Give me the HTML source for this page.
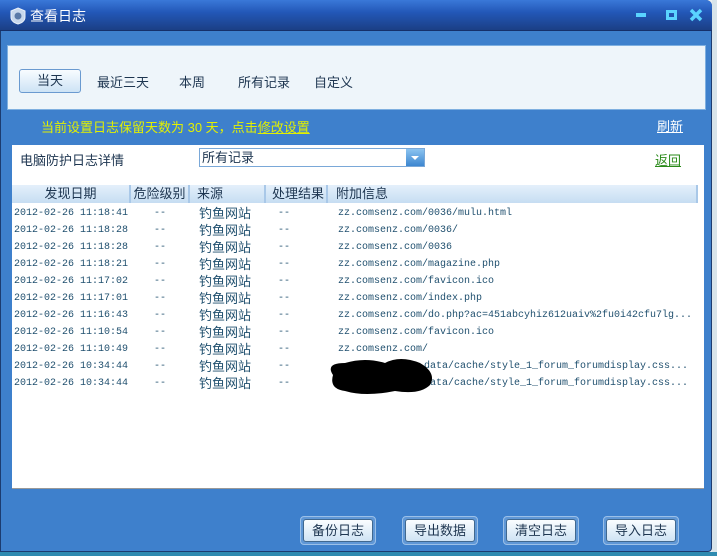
<!DOCTYPE html>
<html><head><meta charset="utf-8"><style>
*{margin:0;padding:0;box-sizing:border-box}
body{width:717px;height:556px;overflow:hidden;background:#e8eef2;font-family:"Liberation Sans","Noto Sans CJK SC",sans-serif;font-size:12px;position:relative}
.a{position:absolute}
.win{left:0;top:0;width:712px;height:552px;background:#3e80cc;border:1px solid #1c3c70;border-radius:0 6px 4px 0}
.title{left:0;top:0;width:712px;height:31px;background:linear-gradient(#3a78d8,#2358b8 40%,#1b3f85);border-bottom:1px solid #15306a;border-radius:0 6px 0 0}
.t{color:#fff;font-size:14px;left:30px;top:6px}
.top{left:7px;top:45px;width:699px;height:65px;background:#eef5fa;border:1px solid #7fb0e0}
.tab{top:26px;font-size:13px;color:#1d3550}
.cur{left:11px;top:23px;width:62px;height:24px;border:1px solid #6a9ad0;border-radius:3px;background:linear-gradient(#f8fcff,#cde3f5);text-align:center;line-height:22px}
.main{left:12px;top:145px;width:692px;height:344px;background:#fff;border-bottom:1px solid #999}
.hd{top:40px;height:18px;background:linear-gradient(#e4f0fb,#c6ddf2);left:0;width:686px;font-size:13px;color:#1d3550;line-height:18px}
.hd div{position:absolute;top:0;height:18px;border-right:2px solid #a9c8e8}
.row{left:0;height:17px;line-height:17px;color:#1f4f6e;width:690px;white-space:nowrap}
.row span{position:absolute;white-space:nowrap}
.m{font-family:"Liberation Mono",monospace;font-size:10px}
.btn{top:516px;width:76px;height:29px;border:1px solid #9bc0e8;border-radius:4px;background:#5f97d6;padding:2px}
.btn div{width:100%;height:100%;border:1px solid #40688f;border-radius:3px;background:linear-gradient(#fafdff,#cfe3f4);text-align:center;line-height:21px;font-size:13px;color:#1d3550}
</style></head><body>
<div class="a" style="left:712px;top:0;width:5px;height:556px;background:#d8e4ea"></div>
<div class="a" style="left:0;top:552px;width:717px;height:4px;background:#2e8ab0"></div>
<div class="a win"></div>
<div class="a title"></div>
<svg class="a" style="left:10px;top:7px" width="16" height="18"><path d="M8 1L15 4V10Q15 15 8 17Q1 15 1 10V4Z" fill="#c8d8ec" stroke="#e8f0fa"/><circle cx="8" cy="9" r="3.5" fill="#5a7aa8"/></svg>
<div class="a t">查看日志</div>
<div class="a" style="left:636px;top:13px;width:10px;height:4px;background:#5ad4ff"></div>
<div class="a" style="left:666px;top:10px;width:11px;height:10px;border:3px solid #5ad4ff"></div>
<svg class="a" style="left:689px;top:8px" width="14" height="14"><path d="M2 2L12 12M12 2L2 12" stroke="#5ad4ff" stroke-width="3.5"/></svg>
<div class="a top">
<div class="a cur" style="font-size:13px;color:#1d3550">当天</div>
<div class="a tab" style="left:89px">最近三天</div>
<div class="a tab" style="left:171px">本周</div>
<div class="a tab" style="left:230px">所有记录</div>
<div class="a tab" style="left:306px">自定义</div>
</div>
<div class="a" style="left:41px;top:117px;color:#e2f000;font-size:13px">当前设置日志保留天数为 30 天，点击<u>修改设置</u></div>
<div class="a" style="left:657px;top:116px;color:#fff;font-size:13px;text-decoration:underline">刷新</div>
<div class="a main">
<div class="a" style="left:8px;top:5px;font-size:13px;color:#1d3550">电脑防护日志详情</div>
<div class="a" style="left:187px;top:3px;width:226px;height:19px;border:1px solid #7aa8d8;background:#fff;font-size:13px;color:#1d3550;padding-left:2px;line-height:17px">所有记录</div>
<div class="a" style="left:394px;top:4px;width:18px;height:17px;background:linear-gradient(#8cc4f0,#3d86d0)"><svg width="18" height="17"><path d="M5 7H13L9 11Z" fill="#fff"/></svg></div>
<div class="a" style="left:643px;top:5px;color:#2a8a1a;font-size:13px;text-decoration:underline">返回</div>
<div class="a hd">
<div style="left:0;width:119px;text-align:center">发现日期</div>
<div style="left:119px;width:59px;text-align:center">危险级别</div>
<div style="left:178px;width:76px;padding-left:7px">来源</div>
<div style="left:254px;width:62px;text-align:right;padding-right:2px">处理结果</div>
<div style="left:316px;width:370px;padding-left:8px">附加信息</div>
</div>
</div>
<div class="a" style="left:12px;top:205px;width:690px">
<div class="a row" style="top:0"><span class="m" style="left:2px">2012-02-26 11:18:41</span><span class="m" style="left:142px">--</span><span style="left:187px;font-size:13px">钓鱼网站</span><span class="m" style="left:266px">--</span><span class="m" style="left:326px">zz.comsenz.com/0036/mulu.html</span></div>
<div class="a row" style="top:17px"><span class="m" style="left:2px">2012-02-26 11:18:28</span><span class="m" style="left:142px">--</span><span style="left:187px;font-size:13px">钓鱼网站</span><span class="m" style="left:266px">--</span><span class="m" style="left:326px">zz.comsenz.com/0036/</span></div>
<div class="a row" style="top:34px"><span class="m" style="left:2px">2012-02-26 11:18:28</span><span class="m" style="left:142px">--</span><span style="left:187px;font-size:13px">钓鱼网站</span><span class="m" style="left:266px">--</span><span class="m" style="left:326px">zz.comsenz.com/0036</span></div>
<div class="a row" style="top:51px"><span class="m" style="left:2px">2012-02-26 11:18:21</span><span class="m" style="left:142px">--</span><span style="left:187px;font-size:13px">钓鱼网站</span><span class="m" style="left:266px">--</span><span class="m" style="left:326px">zz.comsenz.com/magazine.php</span></div>
<div class="a row" style="top:68px"><span class="m" style="left:2px">2012-02-26 11:17:02</span><span class="m" style="left:142px">--</span><span style="left:187px;font-size:13px">钓鱼网站</span><span class="m" style="left:266px">--</span><span class="m" style="left:326px">zz.comsenz.com/favicon.ico</span></div>
<div class="a row" style="top:85px"><span class="m" style="left:2px">2012-02-26 11:17:01</span><span class="m" style="left:142px">--</span><span style="left:187px;font-size:13px">钓鱼网站</span><span class="m" style="left:266px">--</span><span class="m" style="left:326px">zz.comsenz.com/index.php</span></div>
<div class="a row" style="top:102px"><span class="m" style="left:2px">2012-02-26 11:16:43</span><span class="m" style="left:142px">--</span><span style="left:187px;font-size:13px">钓鱼网站</span><span class="m" style="left:266px">--</span><span class="m" style="left:326px">zz.comsenz.com/do.php?ac=451abcyhiz612uaiv%2fu0i42cfu7lg...</span></div>
<div class="a row" style="top:119px"><span class="m" style="left:2px">2012-02-26 11:10:54</span><span class="m" style="left:142px">--</span><span style="left:187px;font-size:13px">钓鱼网站</span><span class="m" style="left:266px">--</span><span class="m" style="left:326px">zz.comsenz.com/favicon.ico</span></div>
<div class="a row" style="top:136px"><span class="m" style="left:2px">2012-02-26 11:10:49</span><span class="m" style="left:142px">--</span><span style="left:187px;font-size:13px">钓鱼网站</span><span class="m" style="left:266px">--</span><span class="m" style="left:326px">zz.comsenz.com/</span></div>
<div class="a row" style="top:153px"><span class="m" style="left:2px">2012-02-26 10:34:44</span><span class="m" style="left:142px">--</span><span style="left:187px;font-size:13px">钓鱼网站</span><span class="m" style="left:266px">--</span><span class="m" style="left:412px">data/cache/style_1_forum_forumdisplay.css...</span></div>
<div class="a row" style="top:170px"><span class="m" style="left:2px">2012-02-26 10:34:44</span><span class="m" style="left:142px">--</span><span style="left:187px;font-size:13px">钓鱼网站</span><span class="m" style="left:266px">--</span><span class="m" style="left:412px">data/cache/style_1_forum_forumdisplay.css...</span></div>
</div>
<svg class="a" style="left:325px;top:355px" width="115" height="42"><path d="M8 20Q0 8 20 8Q40 2 60 8Q75 0 95 8Q112 18 105 30Q95 40 70 36Q40 42 20 36Q4 34 8 20Z" fill="#000"/></svg>
<div class="a btn" style="left:300px"><div>备份日志</div></div>
<div class="a btn" style="left:402px"><div>导出数据</div></div>
<div class="a btn" style="left:503px"><div>清空日志</div></div>
<div class="a btn" style="left:603px"><div>导入日志</div></div>
</body></html>
